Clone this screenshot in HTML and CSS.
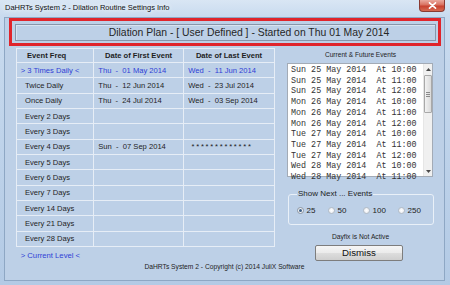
FILE: index.html
```html
<!DOCTYPE html>
<html>
<head>
<meta charset="utf-8">
<link rel="stylesheet" href="styles.css">
</head>
<body>
<div class="window">
  <div class="titlebar">
    <span class="title">DaHRTs System 2 - Dilation Routine Settings Info</span>
    <div class="close">
      <svg width="9" height="7" viewBox="0 0 9 7"><path d="M1.5 0.8 L7.5 6.2 M7.5 0.8 L1.5 6.2" stroke="#ffffff" stroke-width="1.6" stroke-linecap="round"/></svg>
    </div>
  </div>
  <div class="client">
    <div class="redbox">
      <div class="plan">Dilation Plan - [ User Defined ] - Started on Thu 01 May 2014</div>
    </div>
    <div class="main">
      <div class="leftcol">
        <div class="grid">
          <div class="hd hd1">Event Freq</div><div class="hd">Date of First Event</div><div class="hd">Date of Last Event</div>
          <div class="c1 cur curlbl">&gt; 3 Times Daily &lt;</div><div class="d cur">Thu  -  01 May 2014</div><div class="d cur">Wed  -  11 Jun 2014</div>
          <div class="c1">Twice Daily</div><div class="d">Thu  -  12 Jun 2014</div><div class="d">Wed  -  23 Jul 2014</div>
          <div class="c1">Once Daily</div><div class="d">Thu  -  24 Jul 2014</div><div class="d">Wed  -  03 Sep 2014</div>
          <div class="c1">Every 2 Days</div><div class="d"></div><div class="d"></div>
          <div class="c1">Every 3 Days</div><div class="d"></div><div class="d"></div>
          <div class="c1">Every 4 Days</div><div class="d">Sun  -  07 Sep 2014</div><div class="d stars">*************</div>
          <div class="c1">Every 5 Days</div><div class="d"></div><div class="d"></div>
          <div class="c1">Every 6 Days</div><div class="d"></div><div class="d"></div>
          <div class="c1">Every 7 Days</div><div class="d"></div><div class="d"></div>
          <div class="c1">Every 14 Days</div><div class="d"></div><div class="d"></div>
          <div class="c1">Every 21 Days</div><div class="d"></div><div class="d"></div>
          <div class="c1">Every 28 Days</div><div class="d"></div><div class="d"></div>
        </div>
        <div class="level">&gt; Current Level &lt;</div>
      </div>
      <div class="rightcol">
        <div class="evtitle">Current &amp; Future Events</div>
        <div class="listbox">
          <div class="items">Sun 25 May 2014  At 10:00
Sun 25 May 2014  At 11:00
Sun 25 May 2014  At 12:00
Mon 26 May 2014  At 10:00
Mon 26 May 2014  At 11:00
Mon 26 May 2014  At 12:00
Tue 27 May 2014  At 10:00
Tue 27 May 2014  At 11:00
Tue 27 May 2014  At 12:00
Wed 28 May 2014  At 10:00
Wed 28 May 2014  At 11:00</div>
          <div class="scroll">
            <div class="arrow"><svg width="5" height="3" viewBox="0 0 5 3"><path d="M0 3 L2.5 0 L5 3 Z" fill="#4a4a4a"/></svg></div>
            <div class="thumb"><span></span><span></span><span></span></div>
            <div class="track"></div>
            <div class="arrow"><svg width="5" height="3" viewBox="0 0 5 3"><path d="M0 0 L2.5 3 L5 0 Z" fill="#4a4a4a"/></svg></div>
          </div>
        </div>
        <fieldset class="group">
          <legend>Show Next ... Events</legend>
          <div class="radios">
            <div class="radio"><span class="dot on"></span><span>25</span></div>
            <div class="radio"><span class="dot"></span><span>50</span></div>
            <div class="radio"><span class="dot"></span><span>100</span></div>
            <div class="radio"><span class="dot"></span><span>250</span></div>
          </div>
        </fieldset>
        <div class="dayfix">Dayfix is Not Active</div>
        <button class="dismiss">Dismiss</button>
      </div>
    </div>
    <div class="footer">DaHRTs System 2 - Copyright (c) 2014 JuliX Software</div>
  </div>
</div>
</body>
</html>
```

FILE: styles.css
```css
* { box-sizing: border-box; margin: 0; padding: 0; }
html, body { width: 450px; height: 285px; overflow: hidden; }
body { font-family: "Liberation Sans", Arial, sans-serif; color: #1c1c1c; background: #c4d7ed; }

.window {
  width: 450px; height: 285px;
  display: flex; flex-direction: column;
  background: linear-gradient(180deg, #d9e6f4 0px, #c9dbef 16px, #bcd1e9 60%, #b3cae5 100%);
}

.titlebar { height: 17px; display: flex; align-items: flex-start; padding-left: 5px; flex: none; }
.title {
  font-size: 7.5px; line-height: 9px; margin-top: 3px; color: #111;
  text-shadow: 0 0 4px #eef4fb, 0 0 6px #eef4fb;
}
.close {
  margin-left: auto; margin-right: 5px;
  width: 26px; height: 12px;
  border: 1px solid #8a3a32; border-top: none; border-radius: 0 0 4px 4px;
  background: linear-gradient(180deg, #eaa99e 0%, #d9705f 45%, #c8412f 55%, #d66a52 100%);
  display: flex; align-items: center; justify-content: center;
}

.client {
  flex: 1; margin: 0 5px 4px 4px;
  background: #bdd0e7;
  border: 1px solid #8ea7c4;
  display: flex; flex-direction: column;
}

.redbox {
  margin: 0 0 0 4px; width: 432px; height: 28px; flex: none;
  border: 3px solid #e0242b;
  padding: 3px 2px 2px 3px;
}
.plan {
  height: 17px; border: 1px solid #8796ab;
  box-shadow: inset 1px 1px 0 #d8e3f0;
  padding-left: 47px;
  font-size: 10.4px; line-height: 15px; text-align: center; color: #262626;
}

.main { height: 216px; display: flex; align-items: flex-start; flex: none; }

.leftcol { margin: 2px 0 0 11px; width: 259px; }
.grid {
  width: 259px; height: 199px;
  display: grid;
  grid-template-columns: 76px 89px 90px;
  grid-template-rows: 13px repeat(12, 1fr);
  gap: 1px; padding: 1px;
  background: #e6edf6;
}
.grid > div {
  background: #bdd0e7; font-size: 7.6px; display: flex; align-items: center;
  white-space: pre; color: #1e1e1e;
}
.grid .hd { font-weight: bold; justify-content: center; }
.grid .hd1 { justify-content: flex-start; padding-left: 10px; }
.grid .c1 { padding-left: 8px; }
.grid .curlbl { padding-left: 3.7px; }
.grid .d { padding-left: 4.3px; }
.grid .cur { color: #2f3fd6; }
.grid .stars { padding-left: 7.5px; letter-spacing: 1.75px; }

.level { margin-top: 4px; padding-left: 4.7px; font-size: 7.7px; line-height: 10px; color: #2f3fd6; }

.rightcol { margin: 3px 0 0 12px; width: 147px; display: flex; flex-direction: column; }
.evtitle { font-size: 6.6px; line-height: 12px; text-align: center; color: #1e1e1e; }

.listbox {
  margin-top: 2px; width: 146px; height: 114px;
  border: 1px solid #a3abb6; background: #ffffff;
  display: flex;
}
.items {
  flex: 1; padding: 1px 0 0 3px;
  font-family: "Liberation Mono", "Courier New", monospace;
  font-size: 8.4px; line-height: 10.7px; white-space: pre; color: #333333;
}
.scroll {
  width: 9px; display: flex; flex-direction: column;
  background: #f0f0f0; border-left: 1px solid #e6e6e6;
}
.arrow { height: 10px; display: flex; align-items: center; justify-content: center; flex: none; }
.thumb {
  margin: 1px 0 0 0; height: 38px; flex: none;
  border: 1px solid #a9a9a9; border-radius: 1px;
  background: linear-gradient(90deg, #f2f2f2, #dadada);
  display: flex; flex-direction: column; align-items: center; justify-content: center; gap: 1px;
}
.thumb span { width: 4px; height: 1px; background: #8a8a8a; }
.track { flex: 1; }

.group {
  margin: 12px 0 0 1px; width: 146px;
  border: 1px solid #e9f0f8; border-radius: 3px;
  padding: 0 0 9px 8px;
}
.group legend {
  font-size: 8px; line-height: 10px; padding: 0 1px; color: #1e1e1e;
}
.radios {
  margin-top: 7px;
  display: grid; grid-template-columns: 31px 35px 35px auto;
  font-size: 8px; line-height: 9px;
}
.radio { display: flex; align-items: center; gap: 2.5px; color: #1e1e1e; }
.dot {
  width: 7px; height: 7px; border-radius: 50%;
  border: 1px solid #b4bcc6;
  background: radial-gradient(circle at 50% 50%, #ffffff 0, #f2f4f7 50%, #dfe3e8 100%);
  display: flex; align-items: center; justify-content: center;
}
.dot.on { border-color: #8f98a4; }
.dot.on::after { content: ""; width: 3px; height: 3px; border-radius: 50%; background: #3c5f86; }

.dayfix { margin-top: 7px; font-size: 6.7px; line-height: 10px; text-align: center; color: #1e1e1e; }
.dismiss {
  margin: 3px 0 0 28px; width: 88px; height: 16px;
  border: 1px solid #7d7d7d; border-radius: 2px;
  background: linear-gradient(180deg, #f6f6f6 0%, #ebebeb 48%, #dddddd 52%, #cfcfcf 100%);
  font-family: "Liberation Sans", Arial, sans-serif; font-size: 9.7px; line-height: 14px; color: #111;
}

.footer { font-size: 6.7px; line-height: 9px; text-align: center; color: #1e1e1e; }
```
